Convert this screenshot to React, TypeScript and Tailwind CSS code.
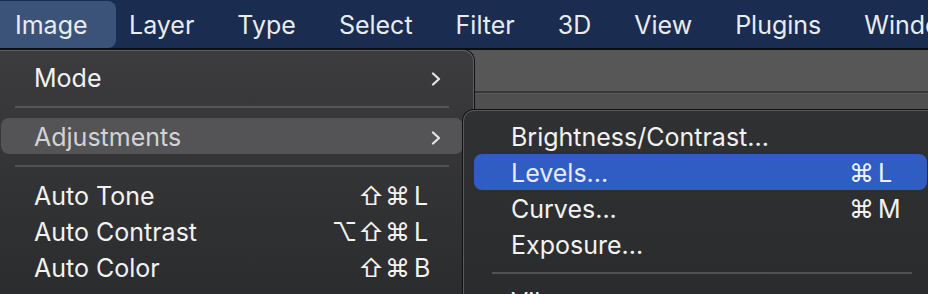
import React from "react";

const font = { fontFamily: "Inter, 'Noto Sans', sans-serif" };

function Chevron() {
  return (
    <svg width="10" height="14" viewBox="0 0 10 14" className="shrink-0">
      <polyline points="2,1.5 8,7 2,12.5" fill="none" stroke="#e6e6e6" strokeWidth="2.2" strokeLinecap="round" strokeLinejoin="round" />
    </svg>
  );
}

function Shortcut({ mods, k, color = "#f2f2f2" }: { mods: string; k: string; color?: string }) {
  return (
    <div className="flex items-center" style={{ color }}>
      <span className="text-right tracking-[1px]">{mods}</span>
      <span className="w-[22px] pl-[3px] text-left">{k}</span>
    </div>
  );
}

export default function App() {
  const bar = ["Layer", "Type", "Select", "Filter", "3D", "View", "Plugins", "Window"];
  return (
    <div className="relative w-[928px] h-[294px] overflow-hidden bg-[#4f4f4f] text-[25px]" style={font}>
      {/* menu bar */}
      <div className="flex h-[48px] items-center overflow-hidden bg-[#1a2c4f] text-[#e9ebef] whitespace-nowrap">
        <div className="flex h-[47px] w-[116px] shrink-0 items-center rounded-r-[8px] bg-[#3b5379] pl-[15px] pt-[4px]">Image</div>
        <div className="ml-[13px] flex shrink-0 gap-[43px] pt-[4px]">
          {bar.map((b) => (
            <span key={b}>{b}</span>
          ))}
        </div>
      </div>
      <div className="h-[2px] bg-[#0d0d0d]" />
      {/* app toolbar area */}
      <div className="h-[43px] bg-[#575757] border-b-[2px] border-[#363636]" />
      <div className="h-px bg-[#5c5c5c]" />

      {/* first dropdown */}
      <div className="absolute left-[-10px] top-[50px] w-[484px] h-[260px] rounded-tr-[11px] border border-[#5d5d5f] shadow-[0_0_0_1px_#111] bg-gradient-to-b from-[#3c3c3e] to-[#2a2b2d] pt-[8px] text-[#f2f2f2]">
        <div className="flex h-[36px] items-center justify-between pl-[43px] pr-[32px] pt-[3px]">
          <span>Mode</span>
          <Chevron />
        </div>
        <div className="mx-[24px] mt-[11px] mb-[10px] h-[2px] bg-[#56575a]" />
        <div className="mx-[10px] flex h-[36px] items-center justify-between rounded-[8px] bg-[#545457] pl-[33px] pr-[22px] pt-[3px] text-[#d2d3d5]">
          <span>Adjustments</span>
          <Chevron />
        </div>
        <div className="mx-[24px] mt-[11px] mb-[10px] h-[2px] bg-[#505154]" />
        <div className="flex h-[36px] items-center justify-between pl-[43px] pr-[40px] pt-[3px]">
          <span>Auto Tone</span>
          <Shortcut mods="⇧⌘" k="L" />
        </div>
        <div className="flex h-[36px] items-center justify-between pl-[43px] pr-[40px] pt-[3px]">
          <span>Auto Contrast</span>
          <Shortcut mods="⌥⇧⌘" k="L" />
        </div>
        <div className="flex h-[36px] items-center justify-between pl-[43px] pr-[40px] pt-[3px]">
          <span>Auto Color</span>
          <Shortcut mods="⇧⌘" k="B" />
        </div>
      </div>

      {/* submenu */}
      <div className="absolute left-[463px] top-[110px] w-[480px] h-[200px] rounded-tl-[11px] border border-[#5b5b5d] shadow-[0_0_0_1px_#111] bg-gradient-to-b from-[#303133] to-[#2a2b2d] pt-[7px] text-[#f2f2f2]">
        <div className="flex h-[36px] items-center pl-[47px] pt-[3px]">Brightness/Contrast...</div>
        <div className="ml-[10px] mr-[15px] flex h-[36px] items-center justify-between rounded-[8px] bg-[#2f5dc3] pl-[37px] pr-[30px] pt-[3px] text-[#e6ebf6]">
          <span>Levels...</span>
          <Shortcut mods="⌘" k="L" color="#eef2fa" />
        </div>
        <div className="flex h-[36px] items-center justify-between pl-[47px] pr-[45px] pt-[3px]">
          <span>Curves...</span>
          <Shortcut mods="⌘" k="M" />
        </div>
        <div className="flex h-[36px] items-center pl-[47px] pt-[3px]">Exposure...</div>
        <div className="ml-[28px] mr-[30px] mt-[10px] mb-[9px] h-[2px] bg-[#505154]" />
        <div className="flex h-[36px] items-center pl-[47px] pt-[3px]">Vibrance...</div>
      </div>
    </div>
  );
}
